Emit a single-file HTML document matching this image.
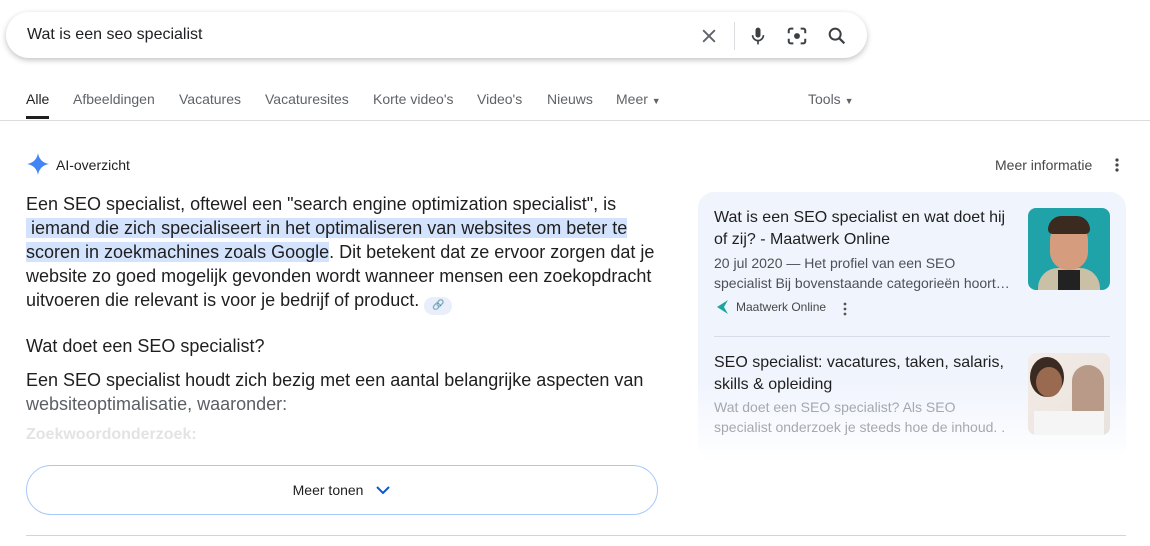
<!DOCTYPE html>
<html><head><meta charset="utf-8"><style>
*{box-sizing:border-box;margin:0;padding:0}
body{width:1150px;height:546px;background:#fff;font-family:"Liberation Sans",Arial,sans-serif;position:relative;overflow:hidden;color:#1f1f1f}
.abs{position:absolute}
.search{left:6px;top:12px;width:861px;height:46px;border-radius:23px;box-shadow:0 2px 6px rgba(32,33,36,.28);background:#fff}
.search .q{left:21px;top:14px;font-size:16px;color:#202124}
.tab{top:91px;font-size:14px;color:#5f6368}
.p{font-size:18px;line-height:24px;color:#1f1f1f}
.hl{background:#d3e3fd}
</style></head><body>
<div class="abs search">
  <div class="abs q">Wat is een seo specialist</div>
  <svg class="abs" style="left:693px;top:14px" width="20" height="20" viewBox="0 0 24 24"><path d="M5 5L19 19M19 5L5 19" stroke="#5f6368" stroke-width="2.2"/></svg>
  <div class="abs" style="left:728px;top:10px;width:1px;height:28px;background:#dadce0"></div>
  <svg class="abs" style="left:742px;top:13px" width="20" height="22" viewBox="0 0 24 24"><rect x="9" y="2" width="6" height="12" rx="3" fill="#3c4043"/><path d="M5.5 11a6.5 6.5 0 0013 0M12 17.5V22" stroke="#3c4043" stroke-width="2" fill="none"/></svg>
  <svg class="abs" style="left:780px;top:13px" width="22" height="22" viewBox="0 0 24 24"><path d="M3 9V6a2 2 0 012-2h3M16 4h3a2 2 0 012 2v3M21 15v3a2 2 0 01-2 2h-3M8 20H5a2 2 0 01-2-2v-3" stroke="#3c4043" stroke-width="2.2" fill="none"/><circle cx="12" cy="12" r="3.2" fill="#3c4043"/></svg>
  <svg class="abs" style="left:820px;top:13px" width="22" height="22" viewBox="0 0 24 24"><circle cx="10" cy="10" r="6" stroke="#3c4043" stroke-width="2.2" fill="none"/><path d="M14.5 14.5L20 20" stroke="#3c4043" stroke-width="2.4"/></svg>
</div>
<div class="abs tab" style="left:26px;color:#1f1f1f">Alle</div>
<div class="abs" style="left:26px;top:116px;width:23px;height:3px;background:#1f1f1f"></div>
<div class="abs tab" style="left:73px">Afbeeldingen</div>
<div class="abs tab" style="left:179px">Vacatures</div>
<div class="abs tab" style="left:265px">Vacaturesites</div>
<div class="abs tab" style="left:373px">Korte video's</div>
<div class="abs tab" style="left:477px">Video's</div>
<div class="abs tab" style="left:547px">Nieuws</div>
<div class="abs tab" style="left:616px">Meer <span style="font-size:9px">▼</span></div>
<div class="abs tab" style="left:808px">Tools <span style="font-size:9px">▼</span></div>
<div class="abs" style="left:0;top:120px;width:1150px;height:1px;background:#dadce0"></div>

<svg class="abs" style="left:26px;top:152px" width="24" height="24" viewBox="0 0 24 24"><path d="M12 1C12.8 7 17 11.2 23 12 17 12.8 12.8 17 12 23 11.2 17 7 12.8 1 12 7 11.2 11.2 7 12 1Z" fill="#4285f4"/></svg>
<div class="abs" style="left:56px;top:157px;font-size:14px">AI-overzicht</div>
<div class="abs" style="left:995px;top:157px;font-size:14px;color:#474747">Meer informatie</div>
<svg class="abs" style="left:1110px;top:156px" width="14" height="18" viewBox="0 0 14 18"><circle cx="7" cy="4" r="1.6" fill="#444"/><circle cx="7" cy="9" r="1.6" fill="#444"/><circle cx="7" cy="14" r="1.6" fill="#444"/></svg>

<div class="abs p" style="left:26px;top:192px;width:650px">Een SEO specialist, oftewel een "search engine optimization specialist", is<br><span class="hl">&nbsp;iemand die zich specialiseert in het optimaliseren van websites om beter te</span><br><span class="hl">scoren in zoekmachines zoals Google</span>. Dit betekent dat ze ervoor zorgen dat je<br>website zo goed mogelijk gevonden wordt wanneer mensen een zoekopdracht<br>uitvoeren die relevant is voor je bedrijf of product. <span style="display:inline-block;width:28px;height:18px;border-radius:9px;background:#e8eefa;vertical-align:-2px;font-size:10px;text-align:center;line-height:18px;color:#444">🔗</span></div>
<div class="abs p" style="left:26px;top:334px">Wat doet een SEO specialist?</div>
<div class="abs p" style="left:26px;top:368px">Een SEO specialist houdt zich bezig met een aantal belangrijke aspecten van<br><span style="color:#5a5f66">websiteoptimalisatie, waaronder:</span></div>
<div class="abs" style="left:26px;top:426px;font-size:16px;font-weight:bold;color:#e3e3e3">Zoekwoordonderzoek:</div>
<div class="abs" style="left:26px;top:465px;width:632px;height:50px;border:1px solid #a8c7fa;border-radius:25px;background:#fff;text-align:center;font-size:14px;line-height:48px">Meer tonen <svg width="16" height="12" viewBox="0 0 16 12" style="margin-left:8px;vertical-align:-1px"><path d="M2 3l6 6 6-6" stroke="#0b57d0" stroke-width="2" fill="none"/></svg></div>
<div class="abs" style="left:26px;top:535px;width:1100px;height:1px;background:#c4d7ee"></div>

<div class="abs" style="left:698px;top:192px;width:428px;height:270px;border-radius:16px;background:linear-gradient(#f0f4fd 0,#f0f4fd 70%,#fff 100%)"></div>
<div class="abs" style="left:714px;top:207px;font-size:16px;line-height:22px;width:300px;color:#1f1f1f">Wat is een SEO specialist en wat doet hij of zij? - Maatwerk Online</div>
<div class="abs" style="left:714px;top:253px;font-size:14px;line-height:20px;width:300px;color:#4d5156">20 jul 2020 — Het profiel van een SEO specialist Bij bovenstaande categorieën hoort…</div>
<svg class="abs" style="left:716px;top:299px" width="14" height="16" viewBox="0 0 14 16"><path d="M12 1L1 8 12 15 8 8Z" fill="#1fa5a0"/></svg>
<div class="abs" style="left:736px;top:300px;font-size:12px;color:#474747">Maatwerk Online</div>
<svg class="abs" style="left:840px;top:301px" width="10" height="16" viewBox="0 0 10 16"><circle cx="5" cy="3" r="1.4" fill="#555"/><circle cx="5" cy="8" r="1.4" fill="#555"/><circle cx="5" cy="13" r="1.4" fill="#555"/></svg>
<div class="abs" style="left:1028px;top:208px;width:82px;height:82px;border-radius:8px;background:#1fa3a8;overflow:hidden">
  <div class="abs" style="left:10px;top:60px;width:62px;height:30px;border-radius:20px 20px 0 0;background:#c9c0a6"></div>
  <div class="abs" style="left:30px;top:62px;width:22px;height:20px;background:#222"></div>
  <div class="abs" style="left:22px;top:14px;width:38px;height:48px;border-radius:18px;background:#d59d7e"></div>
  <div class="abs" style="left:20px;top:8px;width:42px;height:18px;border-radius:18px 18px 6px 6px;background:#3a2a20"></div>
</div>
<div class="abs" style="left:714px;top:336px;width:396px;height:1px;background:#d6dde9"></div>
<div class="abs" style="left:714px;top:352px;font-size:16px;line-height:22px;width:300px">SEO specialist: vacatures, taken, salaris, skills &amp; opleiding</div>
<div class="abs" style="left:714px;top:397px;font-size:14px;line-height:20px;width:300px;color:#a5a8ad">Wat doet een SEO specialist? Als SEO specialist onderzoek je steeds hoe de inhoud. .</div>
<div class="abs" style="left:1028px;top:353px;width:82px;height:82px;border-radius:8px;overflow:hidden;background:linear-gradient(135deg,#f4ece6,#e8e2dd)">
  <div class="abs" style="left:2px;top:4px;width:34px;height:40px;border-radius:50%;background:#3a2a22"></div>
  <div class="abs" style="left:8px;top:14px;width:26px;height:30px;border-radius:50%;background:#9a6a50"></div>
  <div class="abs" style="left:44px;top:12px;width:32px;height:60px;border-radius:16px;background:#b99a88"></div>
  <div class="abs" style="left:6px;top:58px;width:70px;height:24px;background:#f5f5f5"></div>
</div>
</body></html>
